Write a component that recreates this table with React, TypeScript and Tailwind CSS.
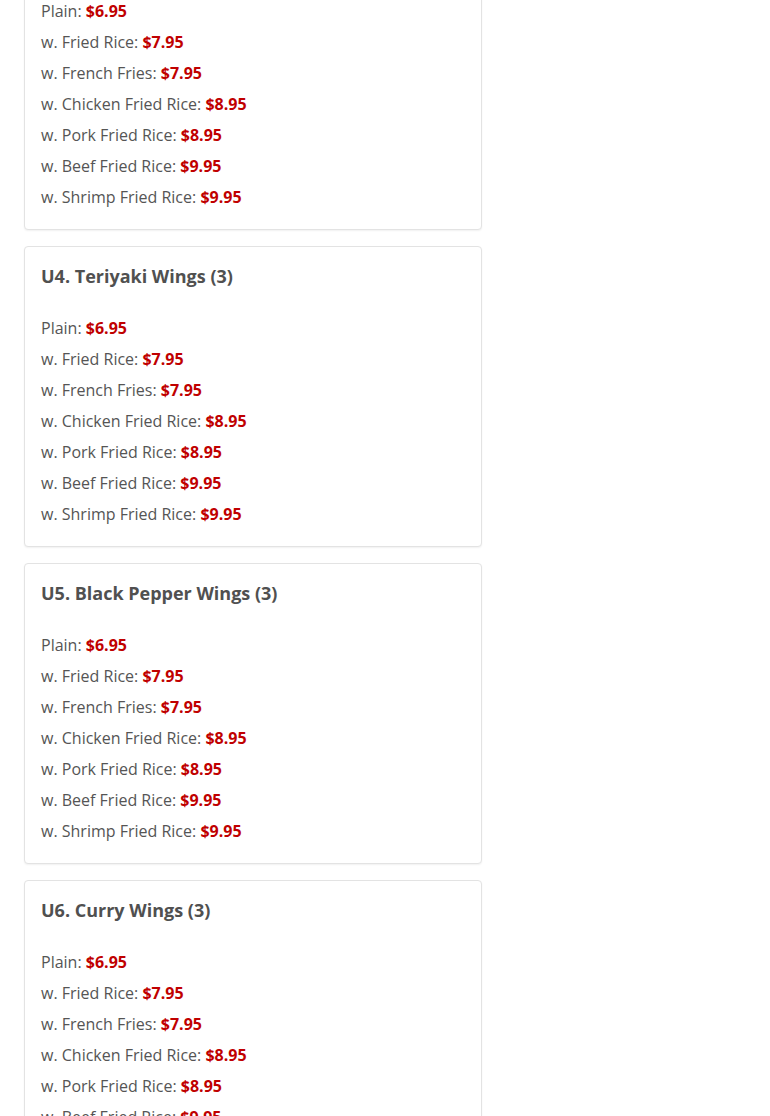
const options = [
  { label: "Plain:", price: "$6.95" },
  { label: "w. Fried Rice:", price: "$7.95" },
  { label: "w. French Fries:", price: "$7.95" },
  { label: "w. Chicken Fried Rice:", price: "$8.95" },
  { label: "w. Pork Fried Rice:", price: "$8.95" },
  { label: "w. Beef Fried Rice:", price: "$9.95" },
  { label: "w. Shrimp Fried Rice:", price: "$9.95" },
];

const items = [
  "U3. Honey Garlic Wings (3)",
  "U4. Teriyaki Wings (3)",
  "U5. Black Pepper Wings (3)",
  "U6. Curry Wings (3)",
];

function MenuCard({ title }: { title: string }) {
  return (
    <div className="bg-white border border-[#e3e3e3] rounded-[4px] shadow-[0_1px_2px_rgba(0,0,0,0.06)] p-4">
      <h3 className="text-[18px] leading-[26px] font-bold text-[#505050]">{title}</h3>
      <div className="mt-[24px]">
        {options.map((o) => (
          <p key={o.label} className="text-[16px] leading-[31px] text-[#555]">
            {o.label} <span className="font-bold text-[#c00000]">{o.price}</span>
          </p>
        ))}
      </div>
    </div>
  );
}

export default function App() {
  return (
    <div className="h-[1116px] overflow-hidden bg-white font-['Open_Sans',sans-serif]">
      <div className="mt-[-71px] pl-6 w-[482px] flex flex-col gap-4">
        {items.map((t) => (
          <MenuCard key={t} title={t} />
        ))}
      </div>
    </div>
  );
}
